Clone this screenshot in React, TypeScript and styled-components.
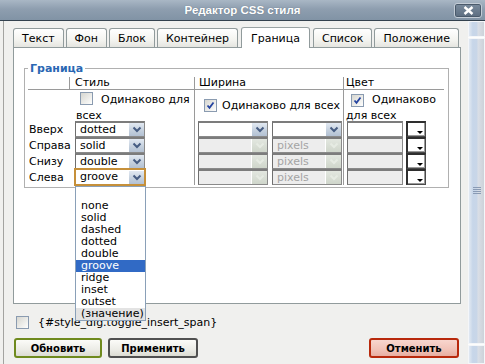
import React from 'react';
import styled, { createGlobalStyle, css } from 'styled-components';

const Global = createGlobalStyle`
  html, body { margin: 0; padding: 0; }
  body {
    width: 485px; height: 364px; overflow: hidden;
    background: #f0f0ee;
    font-family: "DejaVu Sans", Verdana, sans-serif;
    font-size: 11px; color: #000;
  }
  * { box-sizing: border-box; }
`;

const Window = styled.div`
  width: 485px; height: 364px;
  display: flex; flex-direction: column;
  overflow: hidden;
`;

const TitleBar = styled.div`
  flex: none; height: 21px;
  display: grid; grid-template-columns: 1fr auto 1fr; align-items: center;
  background: linear-gradient(#a9b7c5, #8e9eaf 45%, #8193a5);
  border-bottom: 1px solid #33414e;
`;

const Title = styled.div`
  grid-column: 2;
  color: #fff;
  font: bold 11.5px "Liberation Sans", Arial, sans-serif;
  text-shadow: 0 0 1px rgba(60, 75, 90, 0.6);
`;

const CloseBtn = styled.div`
  grid-column: 3; justify-self: end;
  margin-right: 3px;
  width: 28px; height: 15px;
  border: 1px solid #c3ccd6;
  border-radius: 3px;
  background: linear-gradient(#7a8b9d, #5c6d80);
  box-shadow: inset 0 0 0 1px #4a5a6b;
  display: flex; align-items: center; justify-content: center;
`;

const Body = styled.div`
  flex: 1; display: flex; min-height: 0;
`;

const Content = styled.div`
  flex: 1; min-width: 0;
  margin-left: 3px;
  border-left: 1px solid #a3a3a0;
  padding: 6px 7px 0 9px;
  display: flex; flex-direction: column;
`;

const TabRow = styled.div`
  display: flex; align-items: flex-end;
`;

const Tab = styled.div<{ $active?: boolean }>`
  height: 19px;
  padding: 0 8px;
  margin-right: 2px;
  border: 1px solid #919b9c; border-bottom: none;
  border-radius: 3px 3px 0 0;
  background: linear-gradient(#ffffff, #f4f4f0 60%, #e5e5e0);
  display: flex; align-items: center;
  white-space: nowrap;
  ${(p) =>
    p.$active &&
    css`
      height: 21px;
      padding: 0 9px;
      margin: 0 3px -1px 1px;
      background: #fff;
      position: relative; z-index: 1;
      border-top-color: #9aa3a4;
    `}
`;

const Panel = styled.div`
  width: 448px; height: 257px;
  border: 1px solid #919b9c;
  background: #fff;
  padding: 0 11px 0 10px;
`;

const Fieldset = styled.fieldset`
  margin: 14px 0 0 0;
  padding: 0 3px 2px 3px;
  border: 1px solid #b0b0b0;
  min-width: 0;
`;

const Legend = styled.legend`
  padding: 0 2px;
  line-height: 13px;
  color: #2a67b3;
  font-weight: bold;
`;

const Grid = styled.div`
  margin-top: 2px;
  display: grid;
  grid-template-columns: 42px 124px 149px 101px;
  grid-template-rows: 13px 31px repeat(4, 16px);
`;

const HeadCell = styled.div<{ $divider?: boolean; $right?: boolean; $pad: number }>`
  border-bottom: 1px solid #9a9a9a;
  line-height: 12px;
  padding-left: ${(p) => p.$pad}px;
  ${(p) => p.$divider && css`border-left: 1px solid #9a9a9a;`}
  ${(p) => p.$right && css`border-right: 1px solid #9a9a9a;`}
`;

const Cell = styled.div<{ $divider?: boolean; $pad: number; $gap: number }>`
  padding-left: ${(p) => p.$pad}px;
  display: flex; align-items: center; gap: ${(p) => p.$gap}px;
  ${(p) => p.$divider && css`border-left: 1px solid #9a9a9a;`}
`;

const WrapCell = styled.div<{ $divider?: boolean; $pad: number }>`
  padding: 2px 0 0 ${(p) => p.$pad}px;
  line-height: 16px;
  ${(p) => p.$divider && css`border-left: 1px solid #9a9a9a;`}
`;

const MidCell = styled.div<{ $divider?: boolean; $pad: number }>`
  padding-left: ${(p) => p.$pad}px;
  display: flex; align-items: center;
  white-space: nowrap;
  ${(p) => p.$divider && css`border-left: 1px solid #9a9a9a;`}
`;

const Label = styled.div`
  padding-left: 1px;
  display: flex; align-items: center;
  white-space: nowrap;
`;

const Box = styled.span<{ $ml: number; $mr: number }>`
  display: inline-flex; align-items: center; justify-content: center;
  vertical-align: -2px;
  width: 13px; height: 13px; flex: none;
  margin: 0 ${(p) => p.$mr}px 0 ${(p) => p.$ml}px;
  border: 1px solid #8a9bb0;
  background: linear-gradient(135deg, #d6d6d0, #f6f6f4 80%, #fff);
`;

const SelectWrap = styled.div`
  position: relative;
`;

const SelectBox = styled.div<{ $w: number; $disabled?: boolean; $focus?: boolean }>`
  width: ${(p) => p.$w}px; height: 16px;
  display: flex; align-items: center;
  border: 1px solid #8a8a8a;
  border-top: 2px solid #7c7c7c;
  border-left-color: #6f6f6f;
  background: ${(p) => (p.$disabled ? '#ededed' : '#fff')};
  ${(p) =>
    p.$focus &&
    css`
      border-color: #c6903a;
      box-shadow: 0 0 0 1px #c6903a;
      border-top-width: 1px;
    `}
`;

const SelectText = styled.span<{ $disabled?: boolean }>`
  flex: 1;
  padding-left: 4px;
  line-height: 12px;
  color: ${(p) => (p.$disabled ? '#a4a4a4' : '#000')};
  white-space: nowrap; overflow: hidden;
`;

const Arrow = styled.span<{ $disabled?: boolean }>`
  width: 16px; height: 13px;
  display: flex; align-items: center; justify-content: center;
  border-left: 1px solid #fff;
  background: ${(p) =>
    p.$disabled
      ? 'linear-gradient(#e3e7e0, #cfd6cb)'
      : 'linear-gradient(#e2e9f2, #c3cfdd 60%, #b3c1d3)'};
`;

const ColorInput = styled.div<{ $disabled?: boolean }>`
  width: 56px; height: 16px;
  border: 1px solid #8a8a8a;
  border-top: 2px solid #7c7c7c;
  border-left-color: #6f6f6f;
  background: ${(p) => (p.$disabled ? '#ededed' : '#fff')};
`;

const Picker = styled.div`
  position: relative;
  width: 20px; height: 16px; flex: none;
  margin-left: 3px;
  border-style: solid;
  border-color: #2e2e2e #4a4a4a #4a4a4a #2e2e2e;
  border-width: 2px 1px 1px 2px;
  background: #fff;
  box-shadow: inset -1px -1px 0 #9a9a9a;
  &::after {
    content: '';
    position: absolute; right: 2px; bottom: 2px;
    border-style: solid;
    border-width: 3px 3px 0 3px;
    border-color: #000 transparent transparent transparent;
  }
`;

const DropList = styled.ul`
  position: absolute; left: 0; top: 100%;
  margin: 1px 0 0; padding: 1px 0 0;
  width: 71px;
  list-style: none;
  background: #fff;
  border: 1px solid #8aa0b8;
  z-index: 5;
`;

const DropItem = styled.li<{ $sel?: boolean; $muted?: boolean }>`
  height: 12px; line-height: 12px;
  padding-left: 5px;
  white-space: nowrap;
  ${(p) => p.$sel && css`background: #316ac5; color: #fff;`}
  ${(p) => p.$muted && css`background: #e3e3e3;`}
`;

const BottomCheck = styled.div`
  margin: 12px 0 0 3px;
  display: flex; align-items: center;
  white-space: nowrap;
`;

const Buttons = styled.div`
  margin-top: 9px;
  display: flex;
  padding: 0 2px 0 1px;
`;

const Button = styled.div<{ $tone: 'green' | 'grey' | 'red' }>`
  height: 20px;
  padding: 0 2px;
  display: flex; align-items: center; justify-content: center;
  border: 2px solid;
  border-radius: 3px;
  font: bold 10px "DejaVu Sans", Verdana, sans-serif;
  ${(p) =>
    p.$tone === 'green' &&
    css`
      width: 88px; border-color: #6f8a1e;
      background: linear-gradient(#fbfbf8, #ecece6 60%, #dcdcd3);
    `}
  ${(p) =>
    p.$tone === 'grey' &&
    css`
      width: 90px; margin-left: 6px; border-color: #505050;
      background: linear-gradient(#fbfbf8, #ecece6 60%, #dcdcd3);
    `}
  ${(p) =>
    p.$tone === 'red' &&
    css`
      width: 90px; margin-left: auto; border-color: #b8290c;
      background: linear-gradient(#f8d6ce, #f1c2b7 60%, #e8aea1);
    `}
`;

const ScrollCol = styled.div`
  width: 17px; flex: none;
  display: flex; flex-direction: column; gap: 1px;
  background: #fdfdfc;
`;

const ScrollPart = styled.div<{ $h?: number }>`
  ${(p) => (p.$h ? css`height: ${p.$h}px; flex: none;` : css`flex: 1;`)}
  border: 1px solid #f4f6f9;
  background: linear-gradient(90deg, #e2e9f2, #c7d6e9 25%, #c8d6e8 50%, #d9dee6 62%, #cdd2d9 100%);
  display: flex; align-items: center; justify-content: center;
`;

const Chevron = ({ disabled }: { disabled?: boolean }) => (
  <svg width="10" height="7" viewBox="0 0 10 7">
    <path
      d="M1.5 1.5 L5 5 L8.5 1.5"
      fill="none"
      stroke={disabled ? '#e6ebe3' : '#465c82'}
      strokeWidth="2"
    />
  </svg>
);

const Select = ({
  value,
  w = 70,
  disabled,
  focus,
}: {
  value: string;
  w?: number;
  disabled?: boolean;
  focus?: boolean;
}) => (
  <SelectBox $w={w} $disabled={disabled} $focus={focus}>
    <SelectText $disabled={disabled}>{value}</SelectText>
    <Arrow $disabled={disabled}>
      <Chevron disabled={disabled} />
    </Arrow>
  </SelectBox>
);

const Check = ({ checked, ml = 0, mr = 0 }: { checked?: boolean; ml?: number; mr?: number }) => (
  <Box $ml={ml} $mr={mr}>
    {checked && (
      <svg width="9" height="9" viewBox="0 0 9 9">
        <path d="M1.5 4.5 L3.5 6.8 L7.5 1.5" fill="none" stroke="#2443a0" strokeWidth="1.8" />
      </svg>
    )}
  </Box>
);

const options = ['', 'none', 'solid', 'dashed', 'dotted', 'double', 'groove', 'ridge', 'inset', 'outset'];

const rows = [
  { label: 'Вверх', style: 'dotted', first: true },
  { label: 'Справа', style: 'solid' },
  { label: 'Снизу', style: 'double' },
  { label: 'Слева', style: 'groove', open: true },
];

export default function App() {
  return (
    <Window>
      <Global />
      <TitleBar>
        <Title>Редактор CSS стиля</Title>
        <CloseBtn>
          <svg width="11" height="9" viewBox="0 0 11 9">
            <path d="M1.5 1 L9.5 8 M9.5 1 L1.5 8" stroke="#fff" strokeWidth="2.4" />
          </svg>
        </CloseBtn>
      </TitleBar>
      <Body>
        <Content>
          <TabRow>
            <Tab>Текст</Tab>
            <Tab>Фон</Tab>
            <Tab>Блок</Tab>
            <Tab>Контейнер</Tab>
            <Tab $active>Граница</Tab>
            <Tab>Список</Tab>
            <Tab>Положение</Tab>
          </TabRow>
          <Panel>
            <Fieldset>
              <Legend>Граница</Legend>
              <Grid>
                <HeadCell $pad={0} $right />
                <HeadCell $pad={5}>Стиль</HeadCell>
                <HeadCell $pad={4} $divider>Ширина</HeadCell>
                <HeadCell $pad={2} $divider>Цвет</HeadCell>

                <div />
                <WrapCell $pad={6}>
                  <Check ml={4} mr={8} />
                  Одинаково для всех
                </WrapCell>
                <MidCell $pad={4} $divider>
                  <Check checked ml={5} mr={5} />
                  Одинаково для всех
                </MidCell>
                <WrapCell $pad={2} $divider>
                  <Check checked ml={5} mr={8} />
                  Одинаково для всех
                </WrapCell>

                {rows.map((r) => (
                  <React.Fragment key={r.label}>
                    <Label>{r.label}</Label>
                    <Cell $pad={5} $gap={0}>
                      <SelectWrap>
                        <Select value={r.style} focus={r.open} />
                        {r.open && (
                          <DropList>
                            {options.map((o, i) => (
                              <DropItem key={i} $sel={o === 'groove'}>
                                {o}
                              </DropItem>
                            ))}
                            <DropItem $muted>(значение)</DropItem>
                          </DropList>
                        )}
                      </SelectWrap>
                    </Cell>
                    <Cell $pad={3} $gap={4} $divider>
                      <Select value="" disabled={!r.first} />
                      <Select value={r.first ? '' : 'pixels'} disabled={!r.first} />
                    </Cell>
                    <Cell $pad={3} $gap={0} $divider>
                      <ColorInput $disabled={!r.first} />
                      <Picker />
                    </Cell>
                  </React.Fragment>
                ))}
              </Grid>
            </Fieldset>
          </Panel>
          <BottomCheck>
            <Check mr={9} />
            {'{#style_dlg.toggle_insert_span}'}
          </BottomCheck>
          <Buttons>
            <Button $tone="green">Обновить</Button>
            <Button $tone="grey">Применить</Button>
            <Button $tone="red">Отменить</Button>
          </Buttons>
        </Content>
        <ScrollCol>
          <ScrollPart $h={16} />
          <ScrollPart>
            <svg width="8" height="8" viewBox="0 0 8 8">
              <path d="M0 0.5 H8 M0 2.5 H8 M0 4.5 H8 M0 6.5 H8" stroke="#8a9bb4" strokeWidth="1" />
            </svg>
          </ScrollPart>
          <ScrollPart $h={19} />
        </ScrollCol>
      </Body>
    </Window>
  );
}
